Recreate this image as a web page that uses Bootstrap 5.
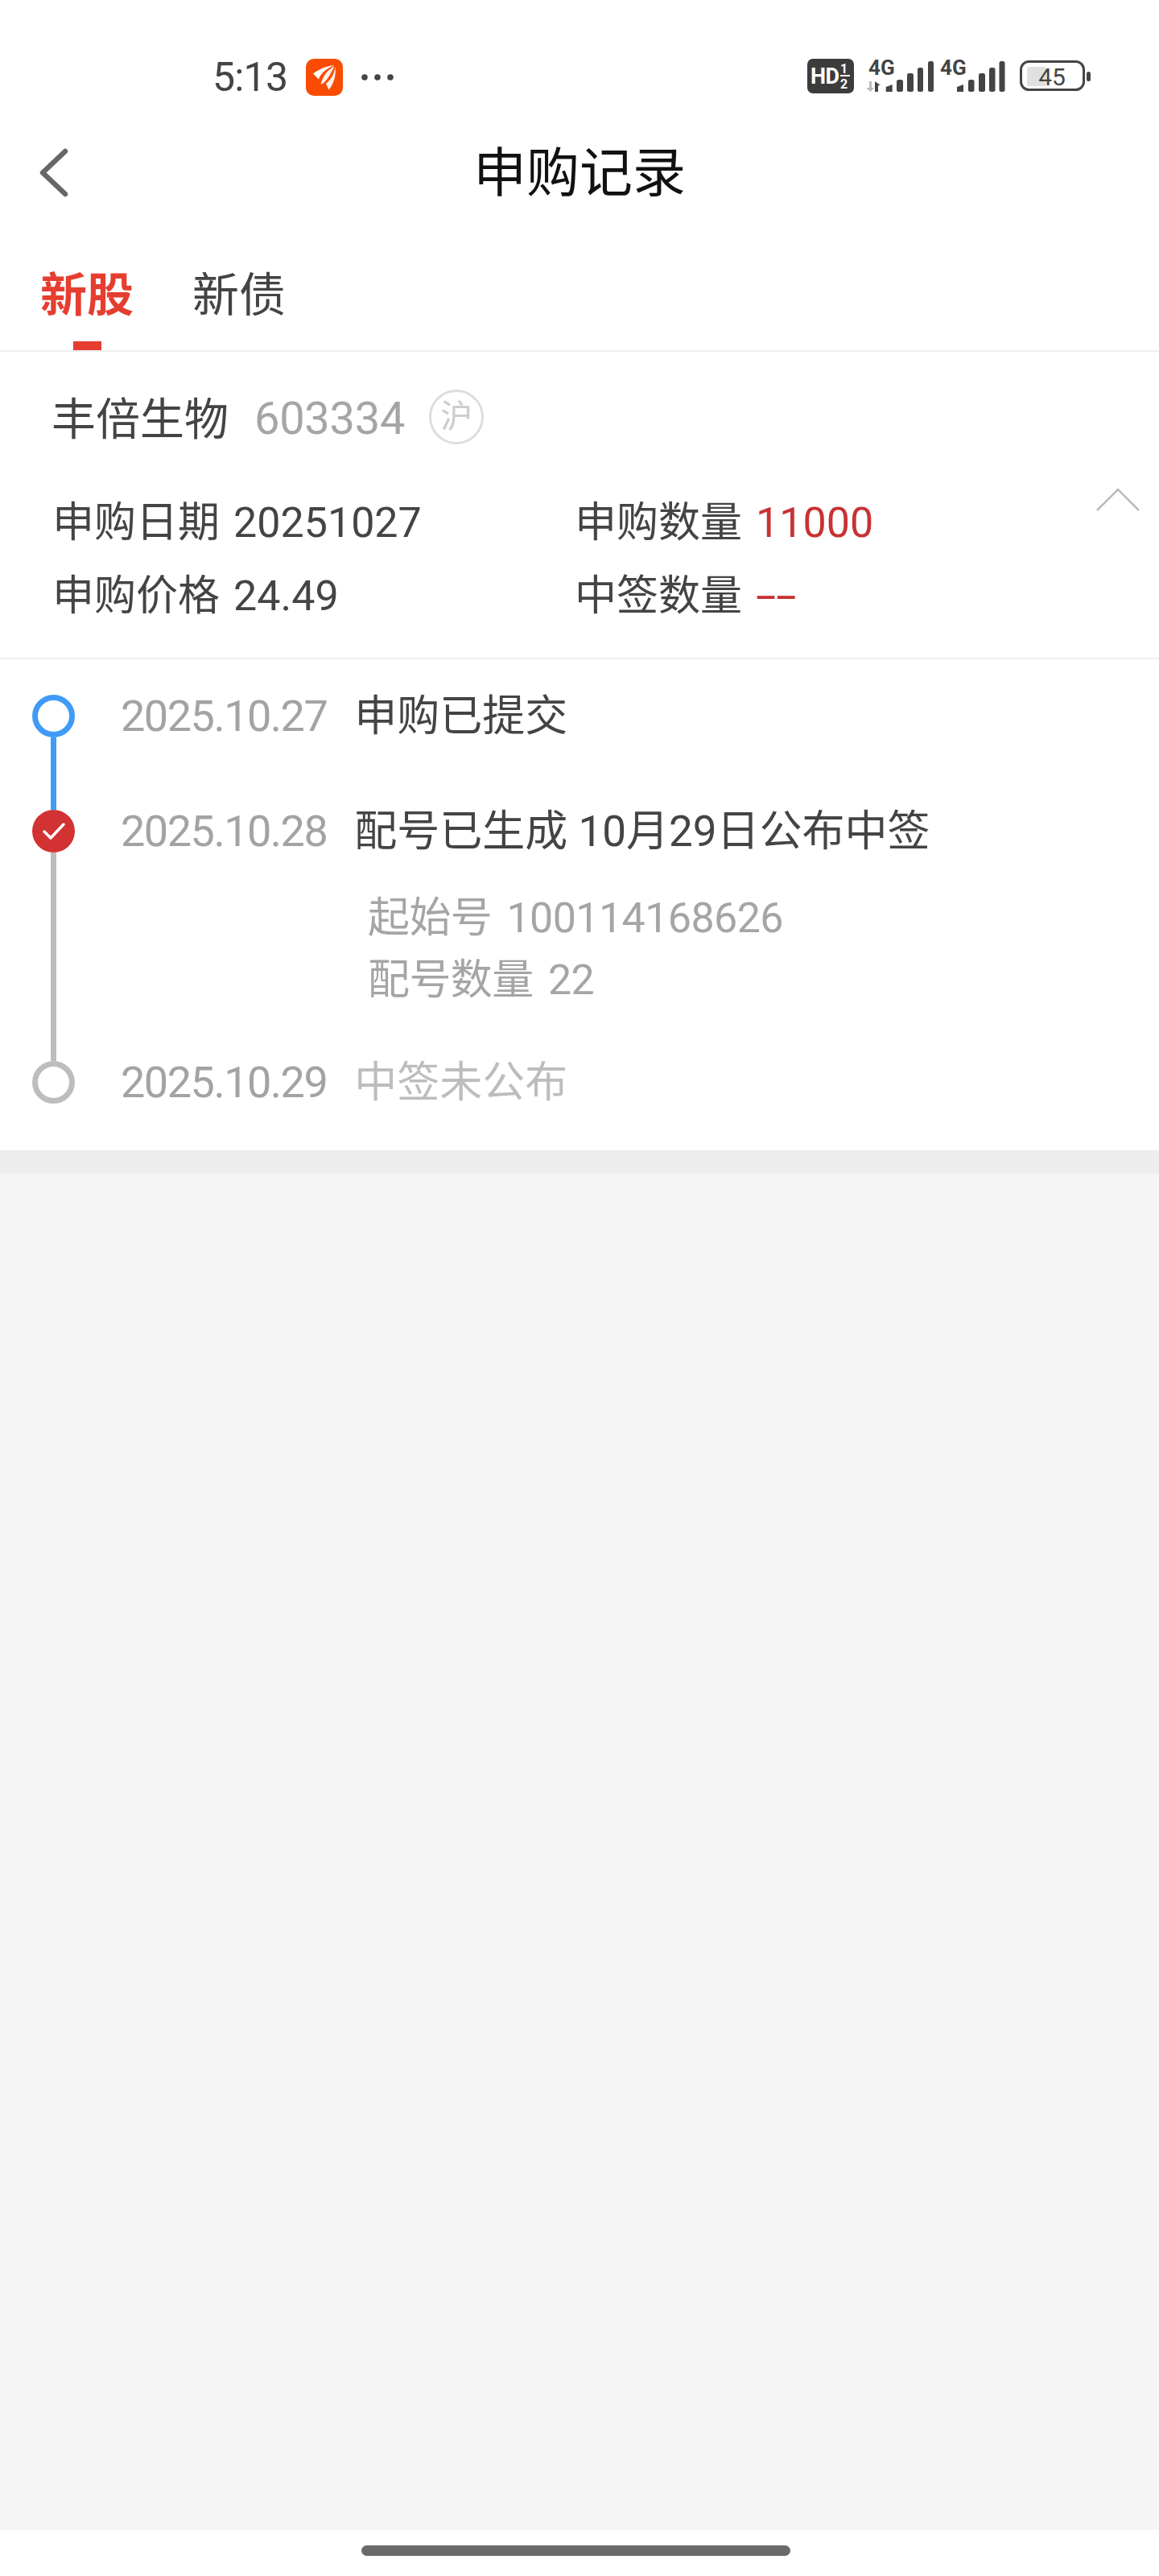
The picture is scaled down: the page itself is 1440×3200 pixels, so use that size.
<!DOCTYPE html>
<html lang="zh-CN">
<head>
<meta charset="utf-8">
<title>申购记录</title>
<link href="https://cdn.jsdelivr.net/npm/bootstrap@5.3.0/dist/css/bootstrap.min.css" rel="stylesheet">
<style>
body{font-family:Roboto,"Noto Sans CJK SC",sans-serif;background:#fff;color:#444;}
.cjk-name{font-size:55px;line-height:61px;padding-top:8px;color:#444;}
.status-bar{padding:73px 84px 0 264px;height:119px;}
.clock{font-size:50px;line-height:46px;width:116px;color:#444;letter-spacing:-.8px;}
.app-tile{width:46px;height:46px;border-radius:10px;background:#f94c00;}
.more-dots{margin-left:23px;}
.hd-gap{margin-left:14px;}
.sig-gap{margin-left:8px;}
.bat-gap{margin-left:18px;}
.title-row{height:130px;margin-top:30px;}
.back-slot{width:130px;padding-left:49px;}
.page-title{font-size:66px;line-height:130px;padding-top:4px;color:#111;font-weight:400;margin:0;}
.tab-row{margin-top:58px;padding-left:50px;gap:73px;border-bottom:2px solid #eee;}
.tab-item{padding:0;color:#444;font-size:58px;line-height:60px;}
.tab-item.on{color:#e53e30;font-weight:700;}
.tab-mark{display:block;width:35px;height:11px;margin-top:27px;background:#e53e30;}
.tab-blank{display:block;height:11px;margin-top:27px;}
.stock-box{padding:46px 0 33px 64px;border-bottom:2px solid #eee;}
.stock-code{font-size:56px;line-height:61px;padding-top:6px;color:#a5a5a5;margin-left:32px;width:189px;letter-spacing:-.3px;}
.market-ring{width:68px;height:68px;border:3px solid #ddd;border-radius:50%;margin-left:28px;color:#ccc;font-size:40px;line-height:1;}
.info-grid{width:1298px;margin-top:50px;}
.info-cell{width:649px;padding-left:1px;font-size:52px;line-height:91px;padding-top:2px;height:91px;color:#444;white-space:nowrap;}
.info-val{margin-left:17px;}
.info-red{color:#c83232;}
.dash-val{display:inline-block;transform:scaleX(1.75);transform-origin:left center;}
.fold-arrow{margin-top:54px;}
.trail{padding:44px 0 45px 40px;}
.rail{width:53px;}
.dot-open{width:53px;height:53px;border-radius:50%;border:7px solid #3f9bf6;}
.dot-grey{border-color:#bdbdbd;}
.dot-red{width:53px;height:53px;border-radius:50%;background:#d23232;}
.rail-line{width:7px;flex-grow:1;background:#3f9bf6;}
.rail-line.grey{background:#bdbdbd;}
.step-one{height:143px;}
.step-two{height:312px;}
.step-body{margin-left:57px;}
.step-head{line-height:53px;white-space:nowrap;}
.step-date{font-size:54px;color:#a3a3a3;letter-spacing:-1.5px;}
.step-text{font-size:53px;color:#444;margin-left:34px;}
.step-mute{color:#bdbdbd;}
.step-extra{margin:30px 0 0 307px;font-size:52px;line-height:77px;color:#a5a5a5;white-space:nowrap;letter-spacing:-.6px;word-spacing:6px;}
.band{height:29px;background:#ededed;}
.fill-grey{background:#f5f5f5;}
.home-wrap{height:57px;padding:19px 9px 0 0;}
.home-pill{width:533px;height:13px;border-radius:7px;background:#6a6a6a;}
svg{overflow:visible;}
svg text{font-family:Roboto,sans-serif;}
</style>
</head>
<body class="min-vh-100 d-flex flex-column">

<div class="status-bar d-flex align-items-start">
  <div class="clock">5:13</div>
  <div class="app-tile flex-shrink-0">
    <svg width="46" height="46" viewBox="0 0 46 46">
      <path fill="#fff" d="M35 8C26 9 16 13 9 18.5L16 25.5C18 19 24 13 35 8Z"/>
      <path fill="#fff" d="M35.5 9C27 14 21 21 18.5 32C24 30 29 23 35.5 9Z" opacity=".92"/>
      <path fill="#fff" d="M36.5 10C35 19 32 25 25 31L28.5 38.5C34 32 38 22 36.5 10Z" opacity=".92"/>
    </svg>
  </div>
  <svg class="more-dots" width="40" height="46" viewBox="0 0 40 46" fill="#444">
    <circle cx="4" cy="23" r="3.8"/><circle cx="20" cy="23" r="3.8"/><circle cx="36" cy="23" r="3.8"/>
  </svg>
  <div class="ms-auto d-flex align-items-start flex-shrink-0">
    <svg width="58" height="43" viewBox="0 0 58 43">
      <rect width="58" height="43" rx="7" fill="#3c3c3c"/>
      <text x="4" y="31" font-size="27" font-weight="700" fill="#fff" letter-spacing="-.5">HD</text>
      <text x="41" y="18" font-size="16" font-weight="700" fill="#fff">1</text>
      <rect x="41" y="20" width="12" height="2" fill="#fff"/>
      <text x="41" y="37" font-size="16" font-weight="700" fill="#fff">2</text>
    </svg>
    <svg class="hd-gap" width="85" height="43" viewBox="0 0 85 43" fill="#444">
      <text x="4" y="19.500" font-size="26" font-weight="700" fill="#444">4G</text>
      <path d="M5 28h3v8h3l-4.500 5L1 36h4z" fill="#bbb"/>
      <path d="M12 28l7 5h-3v8h-4z"/>
      <path d="M25.700 35l8-3v9h-8z"/>
      <rect x="39" y="26" width="8" height="15" rx="2.500"/>
      <rect x="52" y="18" width="8" height="23" rx="2.500"/>
      <rect x="65" y="11" width="7" height="30" rx="2.500"/>
      <rect x="78" y="3" width="7" height="38" rx="2.500"/>
    </svg>
    <svg class="sig-gap" width="81" height="43" viewBox="0 0 81 43" fill="#444">
      <text x="0" y="19.500" font-size="26" font-weight="700" fill="#444">4G</text>
      <path d="M21 35l8-3v9h-8z"/>
      <rect x="35" y="26" width="7.500" height="15" rx="2.500"/>
      <rect x="48" y="18" width="8" height="23" rx="2.500"/>
      <rect x="61" y="11" width="7.500" height="30" rx="2.500"/>
      <rect x="73.500" y="3" width="7" height="38" rx="2.500"/>
    </svg>
    <svg class="bat-gap" width="89" height="43" viewBox="0 0 89 43">
      <rect x="1.500" y="3.500" width="78" height="35" rx="10" fill="none" stroke="#444" stroke-width="3"/>
      <rect x="9" y="10" width="24" height="24" rx="3" fill="#e0e0e0"/>
      <text x="40" y="33" text-anchor="middle" font-size="30" fill="#444">45</text>
      <rect x="83" y="16" width="5" height="12" rx="2.500" fill="#444"/>
    </svg>
  </div>
</div>

<div class="title-row d-flex align-items-center">
  <div class="back-slot flex-shrink-0">
    <svg class="d-block" width="35" height="59" viewBox="0 0 35 59">
      <path d="M32 3L4 29.500L32 56" fill="none" stroke="#666" stroke-width="6.500" stroke-linecap="round" stroke-linejoin="round"/>
    </svg>
  </div>
  <h1 class="page-title flex-grow-1 text-center">申购记录</h1>
  <div class="back-slot flex-shrink-0"></div>
</div>

<div class="tab-row d-flex">
  <div class="tab-item on d-flex flex-column align-items-center">
    <span>新股</span>
    <span class="tab-mark"></span>
  </div>
  <div class="tab-item">
    <span>新债</span>
    <span class="tab-blank"></span>
  </div>
</div>

<section class="stock-box">
  <div class="d-flex align-items-center">
    <span class="cjk-name">丰倍生物</span>
    <span class="stock-code">603334</span>
    <span class="market-ring d-flex align-items-center justify-content-center">沪</span>
  </div>
  <div class="d-flex align-items-start">
    <div class="info-grid d-flex flex-wrap flex-shrink-0">
      <div class="info-cell">申购日期<span class="info-val">20251027</span></div>
      <div class="info-cell">申购数量<span class="info-val info-red">11000</span></div>
      <div class="info-cell">申购价格<span class="info-val">24.49</span></div>
      <div class="info-cell">中签数量<span class="info-val info-red dash-val">--</span></div>
    </div>
    <svg class="fold-arrow flex-shrink-0" width="54" height="29" viewBox="0 0 54 29">
      <path d="M1 28L27 2L53 28" fill="none" stroke="#bbb" stroke-width="2.500"/>
    </svg>
  </div>
</section>

<section class="trail">
  <div class="step-one d-flex">
    <div class="rail d-flex flex-column align-items-center flex-shrink-0">
      <div class="dot-open flex-shrink-0"></div>
      <div class="rail-line"></div>
    </div>
    <div class="step-body">
      <div class="step-head"><span class="step-date">2025.10.27</span><span class="step-text">申购已提交</span></div>
    </div>
  </div>
  <div class="step-two d-flex">
    <div class="rail d-flex flex-column align-items-center flex-shrink-0">
      <div class="dot-red flex-shrink-0 d-flex align-items-center justify-content-center">
        <svg width="30" height="24" viewBox="0 0 30 24"><path d="M3 12L11 20L27 3" fill="none" stroke="#fff" stroke-width="3.500" stroke-linecap="round" stroke-linejoin="round"/></svg>
      </div>
      <div class="rail-line grey"></div>
    </div>
    <div class="step-body">
      <div class="step-head"><span class="step-date">2025.10.28</span><span class="step-text">配号已生成 10月29日公布中签</span></div>
      <div class="step-extra">起始号 100114168626<br>配号数量 22</div>
    </div>
  </div>
  <div class="d-flex">
    <div class="rail flex-shrink-0">
      <div class="dot-open dot-grey"></div>
    </div>
    <div class="step-body">
      <div class="step-head"><span class="step-date">2025.10.29</span><span class="step-text step-mute">中签未公布</span></div>
    </div>
  </div>
</section>

<div class="band"></div>
<div class="fill-grey flex-grow-1"></div>
<div class="home-wrap d-flex justify-content-center">
  <div class="home-pill"></div>
</div>

</body>
</html>
